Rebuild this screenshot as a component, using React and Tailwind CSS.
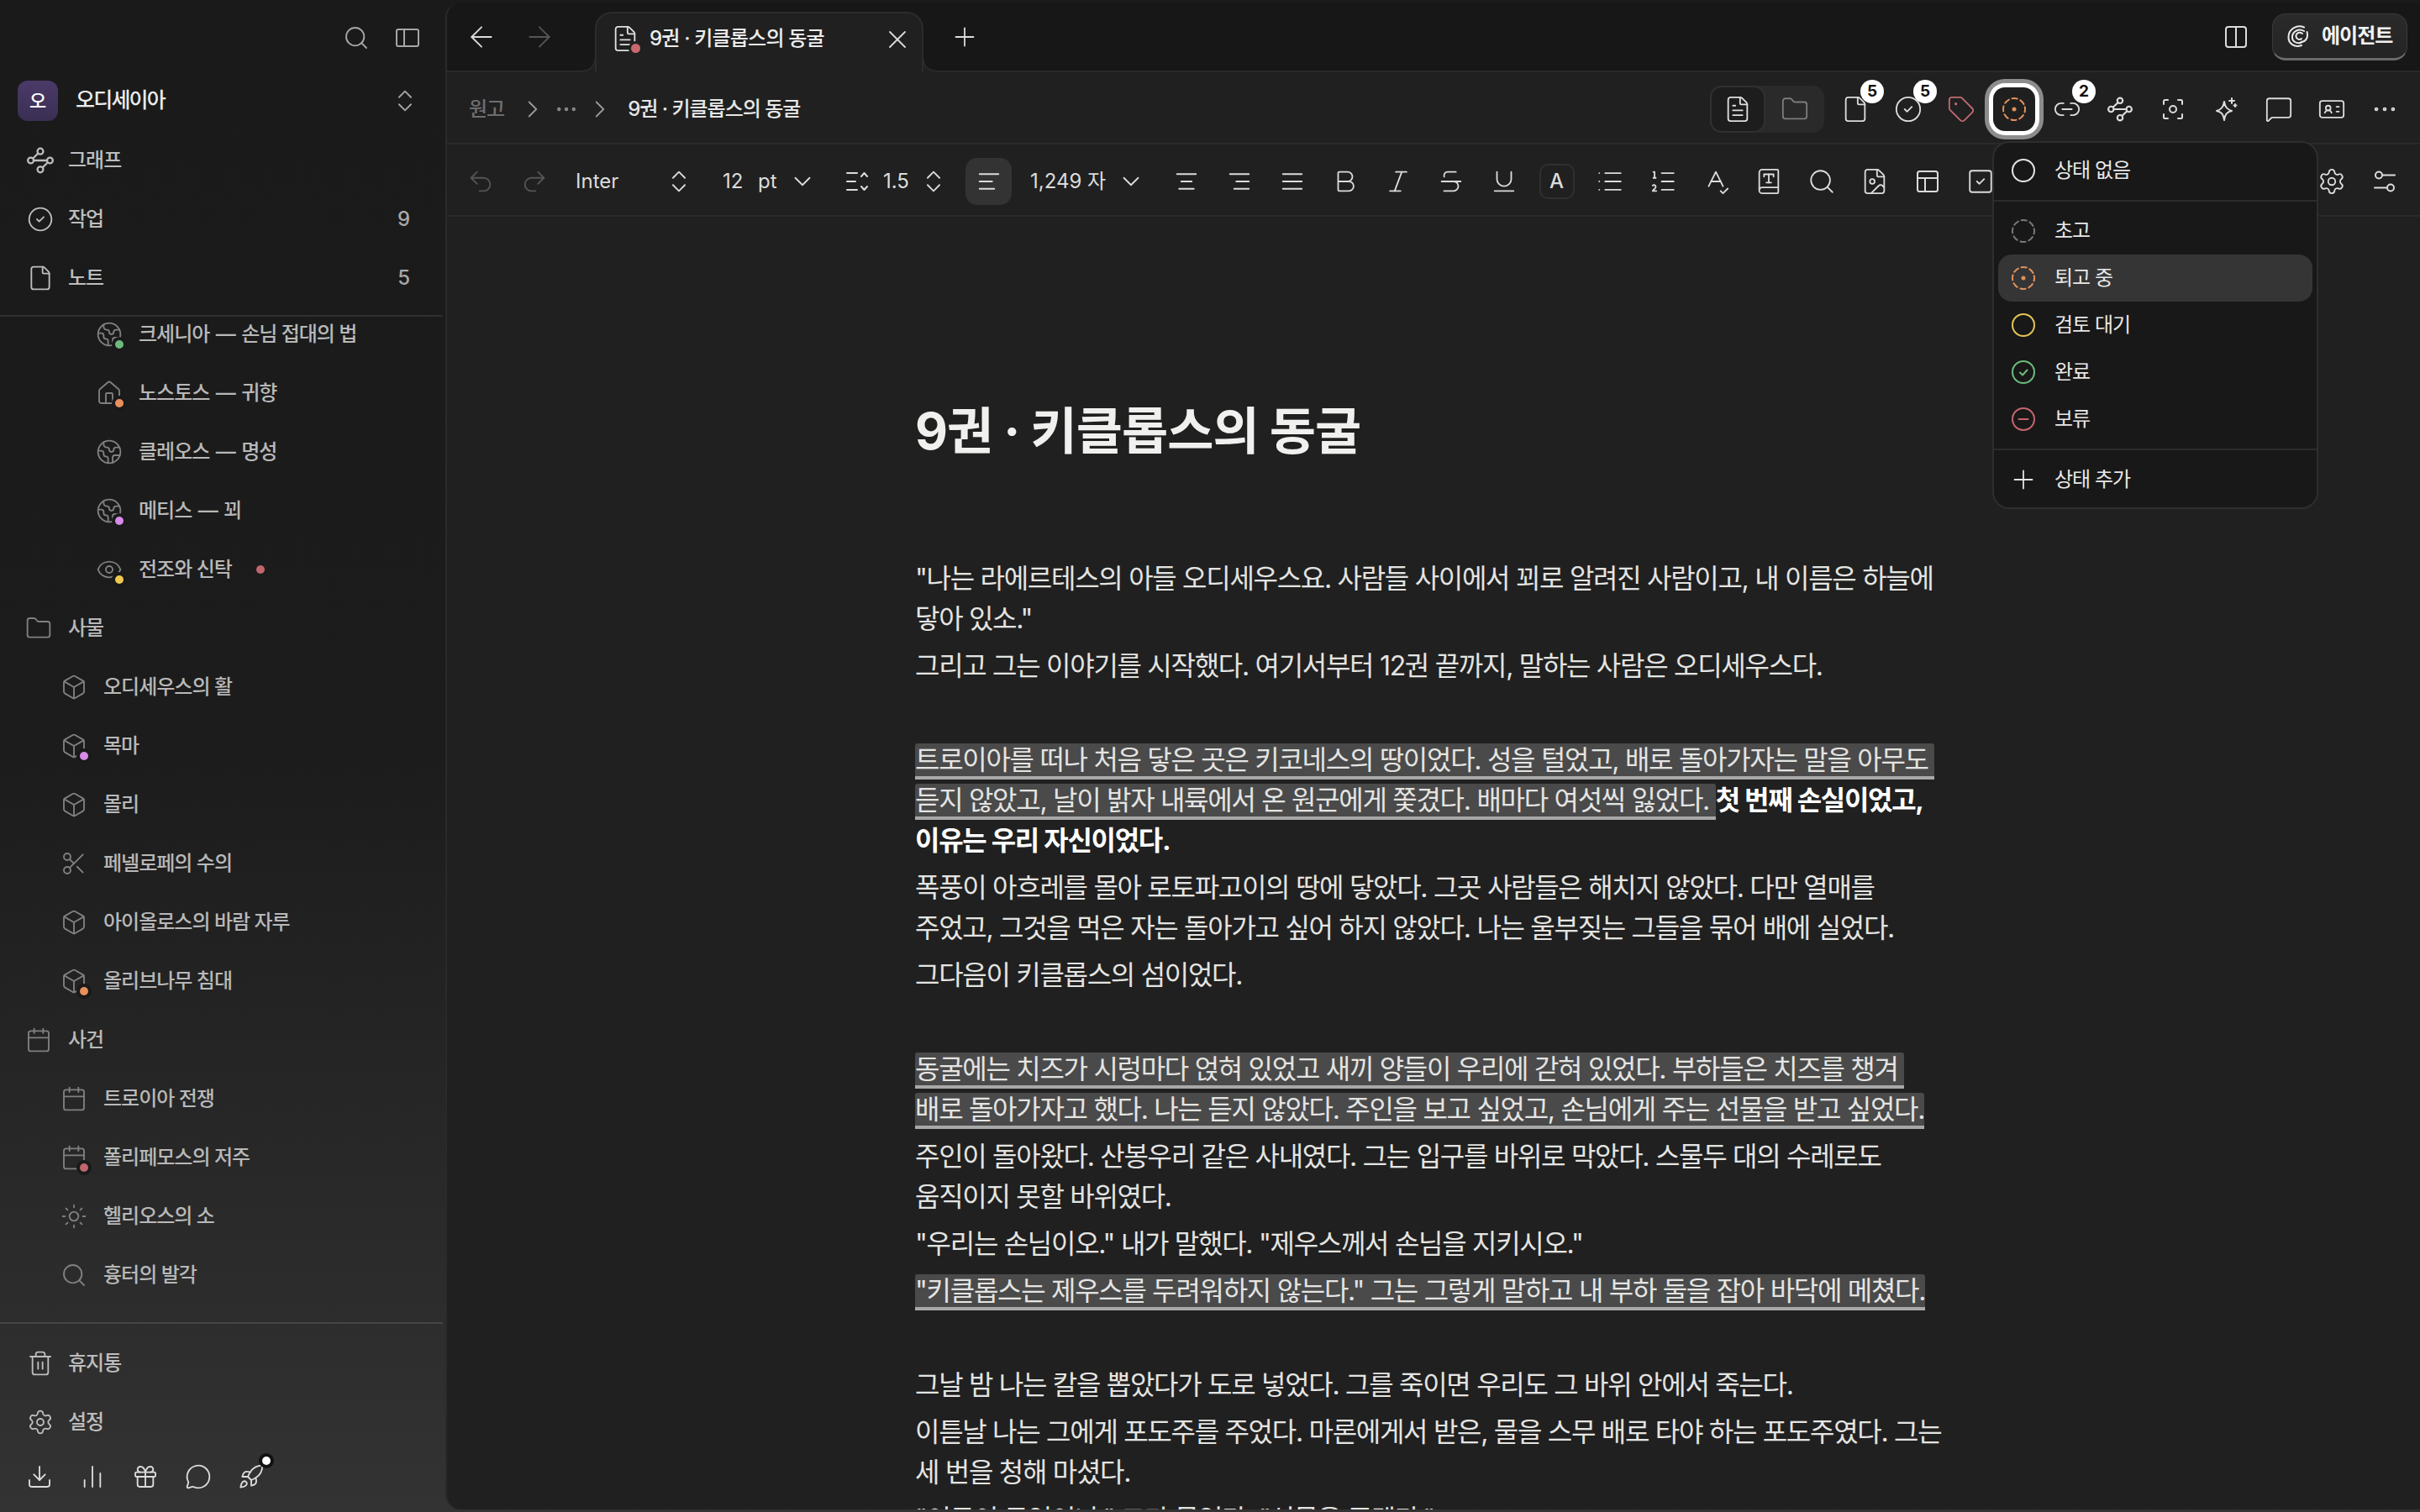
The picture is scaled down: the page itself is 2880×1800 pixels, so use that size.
import React from "react";
import {
  Search, ChevronsUpDown, CircleCheck, File, FileText, Earth, House, Eye, Folder, Box, Scissors, Calendar, Sun,
  Trash2, Settings, Download, ChartNoAxesColumn, Gift, MessageCircle, Rocket, ArrowLeft, ArrowRight, X, Plus,
  ChevronRight, ChevronDown, Ellipsis, Undo2, Redo2, AlignLeft, AlignCenter, AlignRight, AlignJustify, Bold, Italic,
  Strikethrough, Underline, List, ListOrdered, SpellCheck, BookType, FileImage, SquareCheck, Tag, Link2, MessageSquare,
  IdCard,
} from "lucide-react";

const Graph = ({ size = 28, className = "" }) => (
  <svg width={size} height={size} viewBox="0 0 28 28" fill="none" stroke="currentColor" strokeWidth="2" className={className}>
    <circle cx="14" cy="4.500" r="3" />
    <circle cx="4" cy="14" r="3" />
    <circle cx="24" cy="14" r="3" />
    <circle cx="14" cy="23.500" r="3" />
    <path d="M7 14h14M11.800 6.500 6.200 12M21.800 16l-5.600 5.500" />
  </svg>
);
const PanelIcon = ({ className = "" }) => (
  <svg width="30" height="30" viewBox="0 0 30 30" fill="none" stroke="currentColor" strokeWidth="2" className={className}>
    <rect x="2" y="5" width="26" height="20" rx="2" />
    <path d="M11 5v20" />
  </svg>
);
const SplitIcon = ({ className = "" }) => (
  <svg width="30" height="30" viewBox="0 0 30 30" fill="none" stroke="currentColor" strokeWidth="2" className={className}>
    <rect x="3" y="3" width="24" height="24" rx="3" />
    <path d="M15 3v24" />
  </svg>
);
const Spiral = () => (
  <svg width="30" height="30" viewBox="0 0 30 30" fill="none" stroke="#e8e8e8" strokeWidth="2" strokeLinecap="round">
    <path d="M22 4.500C14 1 4 6 3.500 15.500 3 24 11 29 19 26" />
    <path d="M22 9C16 5.500 8.500 9 8 15.500 7.500 21 13 25 19 22.500" />
    <path d="M25.500 10c2 7-2 12-7 12" />
    <path d="M20 12c-4-3-8 0-7.500 3.500.4 3 4 4.500 6.500 2.500" />
  </svg>
);
const ScanIcon = ({ className = "" }) => (
  <svg width="30" height="30" viewBox="0 0 30 30" fill="none" stroke="currentColor" strokeWidth="2" strokeLinecap="round" className={className}>
    <path d="M4 9V5.500A1.500 1.500 0 0 1 5.500 4H9M21 4h3.500A1.500 1.500 0 0 1 26 5.500V9M26 21v3.500a1.500 1.500 0 0 1-1.500 1.500H21M9 26H5.500A1.500 1.500 0 0 1 4 24.500V21" />
    <circle cx="15" cy="15" r="4" />
  </svg>
);
const SparkIcon = ({ className = "" }) => (
  <svg width="30" height="30" viewBox="0 0 30 30" fill="none" stroke="currentColor" strokeWidth="2" strokeLinecap="round" strokeLinejoin="round" className={className}>
    <path d="M13 6c1 6 3 9 9 11-6 1.500-8 4-9 11-1-7-3-9.500-9-11 6-2 8-5 9-11Z" />
    <path d="M22 2v6M19 5h6M26 9v3M24.500 10.500h3" />
  </svg>
);
const TableIcon = ({ className = "" }) => (
  <svg width="30" height="30" viewBox="0 0 30 30" fill="none" stroke="currentColor" strokeWidth="2" className={className}>
    <rect x="3" y="3" width="24" height="24" rx="2.500" />
    <path d="M3 11h24M12 11v16" />
  </svg>
);
const LineHeightIcon = ({ className = "" }) => (
  <svg width="30" height="30" viewBox="0 0 30 30" fill="none" stroke="currentColor" strokeWidth="2" strokeLinecap="round" strokeLinejoin="round" className={className}>
    <path d="M3 5h12M3 15h10M3 25h12M20 9l3.500-4 3.500 4M20 21l3.500 4 3.500-4" />
  </svg>
);
const SlidersIcon = ({ className = "" }) => (
  <svg width="30" height="30" viewBox="0 0 30 30" fill="none" stroke="currentColor" strokeWidth="2" strokeLinecap="round" className={className}>
    <circle cx="8" cy="7.500" r="4" />
    <path d="M12 7.500h15M3 22.500h15" />
    <circle cx="22" cy="22.500" r="4" />
  </svg>
);

const Status = ({ kind }) => {
  const common = { width: 28, height: 28, viewBox: "0 0 28 28", fill: "none", strokeWidth: 2 };
  if (kind === "none") return <svg {...common} stroke="#e4e4e4"><circle cx="14" cy="14" r="13" /></svg>;
  if (kind === "draft") return <svg {...common} stroke="#777"><circle cx="14" cy="14" r="13" strokeDasharray="6.200 4" strokeLinecap="round" transform="rotate(-12 14 14)" /></svg>;
  if (kind === "rev")
    return (
      <svg {...common} stroke="#e0905c">
        <circle cx="14" cy="14" r="13" strokeDasharray="6.200 4" strokeLinecap="round" transform="rotate(-12 14 14)" />
        <circle cx="14" cy="14" r="2.500" fill="#e0905c" stroke="none" />
      </svg>
    );
  if (kind === "wait") return <svg {...common} stroke="#e5c454"><circle cx="14" cy="14" r="13" /></svg>;
  if (kind === "done")
    return (
      <svg {...common} stroke="#6cbb7c" strokeLinecap="round" strokeLinejoin="round">
        <circle cx="14" cy="14" r="13" />
        <path d="m10 14.500 3 3 5.500-6" />
      </svg>
    );
  return (
    <svg {...common} stroke="#c4656e" strokeLinecap="round">
      <circle cx="14" cy="14" r="13" />
      <path d="M8.500 14h11" />
    </svg>
  );
};

const sideIcon = { size: 32, strokeWidth: 1.4 };

const NavRow = ({ Icon, label, count }) => (
  <div className="flex h-[70px] items-center pl-[32px] pr-[42px] text-[#bdbdbd]">
    <Icon {...sideIcon} className="shrink-0 text-[#bdbdbd]" />
    <span className="ml-[17px] text-[24px] font-medium tracking-[-1px]">{label}</span>
    {count && <span className="ml-auto text-[24px] font-medium text-[#a8a8a8]">{count}</span>}
  </div>
);

const TreeRow = ({ pl, Icon, label, dot, trail, dash }) => (
  <div className={`flex h-[70px] items-center ${pl}`}>
    <span className="relative shrink-0">
      <Icon {...sideIcon} className="text-[#808080]" />
      {dot && <span className={`absolute left-[23px] top-[23px] h-[10px] w-[10px] rounded-full shadow-[0_0_0_4px_#1a1a1a] ${dot}`} />}
    </span>
    <span className="ml-[19px] whitespace-nowrap text-[24px] font-medium tracking-[-1px] text-[#b8b8b8]">
      {label}
      {dash && <> <span className="mx-[2px]">—</span> {dash}</>}
    </span>
    {trail && <span className="ml-[29px] h-[10px] w-[10px] rounded-full bg-[#c0666c]" />}
  </div>
);

const L1 = "pl-[30px]";
const L2 = "pl-[72px]";
const L3 = "pl-[114px]";

const Sidebar = () => (
  <aside className="flex h-full w-[530px] shrink-0 flex-col">
    <div className="flex h-[90px] shrink-0 items-center justify-end gap-[30px] pr-[30px] text-[#a6a6a6]">
      <Search size={32} strokeWidth={1.4} />
      <PanelIcon />
    </div>
    <div className="flex h-[60px] shrink-0 items-center pl-[21px] pr-[31px]">
      <div className="flex h-[48px] w-[48px] items-center justify-center rounded-[12px] bg-gradient-to-b from-[#4a3a68] to-[#3b2f54] text-[22px] font-medium text-white">오</div>
      <span className="ml-[21px] text-[25px] font-medium tracking-[-1.8px] text-[#ececec]">오디세이아</span>
      <ChevronsUpDown size={34} strokeWidth={1.3} className="ml-auto text-[#a6a6a6]" />
    </div>
    <div className="mt-[6px] shrink-0">
      <NavRow Icon={Graph} label="그래프" />
      <NavRow Icon={CircleCheck} label="작업" count="9" />
      <NavRow Icon={File} label="노트" count="5" />
    </div>
    <div className="mr-[3px] mt-[9px] h-[2px] shrink-0 bg-[#303030]" />
    <div className="min-h-0 flex-1 overflow-hidden">
      <div className="-mt-[14px]">
        <TreeRow pl={L3} Icon={Earth} label="크세니아" dash="손님 접대의 법" dot="bg-[#6cbb7c]" />
        <TreeRow pl={L3} Icon={House} label="노스토스" dash="귀향" dot="bg-[#e8905c]" />
        <TreeRow pl={L3} Icon={Earth} label="클레오스" dash="명성" />
        <TreeRow pl={L3} Icon={Earth} label="메티스" dash="꾀" dot="bg-[#d98ae8]" />
        <TreeRow pl={L3} Icon={Eye} label="전조와 신탁" dot="bg-[#f0c850]" trail />
        <TreeRow pl={L1} Icon={Folder} label="사물" />
        <TreeRow pl={L2} Icon={Box} label="오디세우스의 활" />
        <TreeRow pl={L2} Icon={Box} label="목마" dot="bg-[#d98ae8]" />
        <TreeRow pl={L2} Icon={Box} label="몰리" />
        <TreeRow pl={L2} Icon={Scissors} label="페넬로페의 수의" />
        <TreeRow pl={L2} Icon={Box} label="아이올로스의 바람 자루" />
        <TreeRow pl={L2} Icon={Box} label="올리브나무 침대" dot="bg-[#e8905c]" />
        <TreeRow pl={L1} Icon={Calendar} label="사건" />
        <TreeRow pl={L2} Icon={Calendar} label="트로이아 전쟁" />
        <TreeRow pl={L2} Icon={Calendar} label="폴리페모스의 저주" dot="bg-[#c0666c]" />
        <TreeRow pl={L2} Icon={Sun} label="헬리오스의 소" />
        <TreeRow pl={L2} Icon={Search} label="흉터의 발각" />
        <TreeRow pl={L2} Icon={Calendar} label="" />
      </div>
    </div>
    <div className="mr-[3px] h-[2px] shrink-0 bg-[#454545]" />
    <div className="mt-[12px] shrink-0">
      <NavRow Icon={Trash2} label="휴지통" />
      <NavRow Icon={Settings} label="설정" />
    </div>
    <div className="mb-[12px] flex h-[60px] shrink-0 items-center pl-[15px] text-[#dcdcdc]">
      {[Download, ChartNoAxesColumn, Gift, MessageCircle].map((I, i) => (
        <span key={i} className="flex w-[63px] justify-center"><I size={32} strokeWidth={1.4} /></span>
      ))}
      <span className="relative flex w-[63px] justify-center">
        <Rocket size={32} strokeWidth={1.4} />
        <span className="absolute left-[45px] top-[-8px] h-[10px] w-[10px] rounded-full bg-white shadow-[0_0_0_4px_#111]" />
      </span>
    </div>
  </aside>
);

const Badge = ({ n }) => (
  <span className="absolute left-[38px] top-[-7px] flex h-[28px] w-[28px] items-center justify-center rounded-full bg-white text-[19px] font-bold text-[#111]">{n}</span>
);

const Slot = ({ children, className = "" }) => (
  <span className={`relative flex h-[56px] w-[63px] shrink-0 items-center justify-center ${className}`}>{children}</span>
);

const ti = { size: 34, strokeWidth: 1.3 };
const big = { size: 40, strokeWidth: 1.1 };

const TabBar = () => (
  <div className="flex h-[83px] shrink-0 items-center border-b-2 border-[#2a2a2a] bg-[#171717] pr-[15px]">
    <ArrowLeft {...big} className="ml-[21px] shrink-0 text-[#dcdcdc]" />
    <ArrowRight {...big} className="ml-[29px] shrink-0 text-[#555]" />
    <div className="relative -mb-[2px] ml-[46px] flex h-[72px] w-[391px] shrink-0 items-center self-end rounded-t-[20px] border-x-2 border-t-2 border-[#2c2c2c] bg-[#202020] pb-[10px] pl-[17px]">
      <span className="absolute bottom-0 left-[-16px] h-[16px] w-[14px] bg-[radial-gradient(circle_at_0_0,#171717_13px,#2c2c2c_14px,#202020_16px)]" />
      <span className="absolute bottom-0 right-[-16px] h-[16px] w-[14px] bg-[radial-gradient(circle_at_100%_0,#171717_13px,#2c2c2c_14px,#202020_16px)]" />
      <span className="relative shrink-0">
        <FileText size={34} strokeWidth={1.3} className="text-[#e0e0e0]" />
        <span className="absolute left-[24px] top-[23px] h-[11px] w-[11px] rounded-full bg-[#c8686e] shadow-[0_0_0_3px_#202020]" />
      </span>
      <span className="ml-[12px] whitespace-nowrap text-[24px] font-medium tracking-[-0.8px] text-[#ececec]">9권 · 키클롭스의 동굴</span>
      <X size={36} strokeWidth={1.2} className="absolute left-[340px] top-[13px] text-[#dcdcdc]" />
    </div>
    <Plus size={36} strokeWidth={1.2} className="ml-[31px] shrink-0 text-[#dcdcdc]" />
    <SplitIcon className="ml-auto shrink-0 text-[#dcdcdc]" />
    <div className="ml-[28px] flex h-[56px] w-[161px] shrink-0 items-center rounded-[16px] border border-b-[3px] border-[#3a3a3a] border-b-[#6a6a6a] bg-gradient-to-b from-[#2a2a2a] to-[#242424] pl-[15px]">
      <Spiral />
      <span className="ml-[13px] whitespace-nowrap text-[24px] font-bold tracking-[-1px] text-[#f2f2f2]">에이전트</span>
    </div>
  </div>
);

const Crumbs = () => (
  <div className="flex h-[86px] shrink-0 items-center border-b-2 border-[#2a2a2a] pl-[26px] pr-[11px] pt-[4px]">
    <span className="text-[24px] font-medium tracking-[-1px] text-[#6e6e6e]">원고</span>
    <ChevronRight size={34} strokeWidth={1.3} className="ml-[17px] text-[#9a9a9a]" />
    <Ellipsis size={30} strokeWidth={1.5} className="ml-[8px] text-[#8a8a8a]" />
    <ChevronRight size={34} strokeWidth={1.3} className="ml-[8px] text-[#9a9a9a]" />
    <span className="ml-[16px] whitespace-nowrap text-[24px] font-medium tracking-[-1px] text-[#e6e6e6]">9권 · 키클롭스의 동굴</span>
    <div className="ml-auto flex h-[56px] w-[136px] shrink-0 rounded-[14px] bg-[#2a2a2a]">
      <span className="flex h-[56px] w-[66px] items-center justify-center rounded-[14px] border-2 border-[#303030] bg-[#1d1d1d] text-[#e0e0e0]"><FileText {...ti} /></span>
      <span className="flex flex-1 items-center justify-center text-[#7c7c7c]"><Folder {...ti} /></span>
    </div>
    <div className="ml-[5px] flex text-[#dcdcdc]">
      <Slot><File {...ti} /><Badge n="5" /></Slot>
      <Slot><CircleCheck {...ti} /><Badge n="5" /></Slot>
      <Slot><Tag {...ti} className="text-[#c06a70]" /></Slot>
      <Slot>
        <span className="flex h-[52px] w-[50px] items-center justify-center rounded-[14px] bg-[#1f1f1f] shadow-[0_0_0_5px_#ffffff,0_0_0_10px_#8c8c8c]"><Status kind="rev" /></span>
      </Slot>
      <Slot><Link2 {...ti} /><Badge n="2" /></Slot>
      <Slot><Graph size={30} /></Slot>
      <Slot><ScanIcon /></Slot>
      <Slot><SparkIcon /></Slot>
      <Slot><MessageSquare {...ti} /></Slot>
      <Slot><IdCard {...ti} /></Slot>
      <Slot><Ellipsis {...ti} /></Slot>
    </div>
  </div>
);

const tool = { size: 34, strokeWidth: 1.3 };
const al = { size: 30, strokeWidth: 1.5 };
const Toolbar = () => (
  <div className="flex h-[86px] shrink-0 items-center border-b-2 border-[#2a2a2a] pl-[8px] pr-[11px] pt-[4px] text-[24px] text-[#dcdcdc]">
    <Slot className="w-[62px]"><Undo2 {...tool} className="text-[#555]" /></Slot>
    <Slot className="ml-[1px] w-[62px]"><Redo2 {...tool} className="text-[#555]" /></Slot>
    <span className="ml-[18px] w-[108px] shrink-0">Inter</span>
    <ChevronsUpDown {...tool} className="-mx-[2px] shrink-0" />
    <span className="ml-[37px] w-[42px] shrink-0">12</span>
    <span className="w-[38px] shrink-0">pt</span>
    <ChevronDown {...tool} className="-mx-[2px] shrink-0" />
    <LineHeightIcon className="ml-[35px] shrink-0" />
    <span className="ml-[16px] w-[45px] shrink-0">1.5</span>
    <ChevronsUpDown {...tool} className="-mx-[2px] shrink-0" />
    <span className="ml-[23px] flex h-[56px] w-[55px] shrink-0 items-center justify-center rounded-[14px] bg-[#333333]"><AlignLeft {...al} /></span>
    <span className="ml-[22px] w-[105px] shrink-0 whitespace-nowrap">1,249 자</span>
    <ChevronDown {...tool} className="-mx-[2px] shrink-0" />
    <div className="ml-[19px] flex">
      <Slot><AlignCenter {...al} /></Slot>
      <Slot><AlignRight {...al} /></Slot>
      <Slot><AlignJustify {...al} /></Slot>
      <Slot><Bold {...tool} /></Slot>
      <Slot><Italic {...tool} /></Slot>
      <Slot><Strikethrough {...tool} /></Slot>
      <Slot><Underline {...tool} /></Slot>
      <Slot><span className="flex h-[42px] w-[42px] items-center justify-center rounded-[10px] border-2 border-[#303030] font-medium">A</span></Slot>
      <Slot><List {...tool} /></Slot>
      <Slot><ListOrdered {...tool} /></Slot>
      <Slot><SpellCheck {...tool} /></Slot>
      <Slot><BookType {...tool} /></Slot>
      <Slot><Search {...tool} /></Slot>
      <Slot><FileImage {...tool} /></Slot>
      <Slot><TableIcon /></Slot>
      <Slot><SquareCheck {...tool} /></Slot>
    </div>
    <div className="ml-auto flex">
      <Slot><Settings {...tool} /></Slot>
      <Slot><SlidersIcon /></Slot>
    </div>
  </div>
);

const Hl = ({ children }) => (
  <span className="rounded-t-[3px] border-b-4 border-[#a8a8a8] bg-[#4a4a4a] box-decoration-clone">{children}</span>
);
const P = ({ children }) => <p className="mb-2 whitespace-nowrap">{children}</p>;
const Gap = () => <div className="h-[56px]" />;

const Editor = () => (
  <div className="min-h-0 flex-1 overflow-hidden pl-[557px] pt-[219px]">
    <h1 className="h-[72px] text-[60px] font-bold leading-[72px] tracking-[-1px] text-[#f0f0ee]">9권 · 키클롭스의 동굴</h1>
    <div className="mt-[116px] text-[32px] leading-[48px] tracking-[-1.3px] text-[#e4e4e2]">
      <P>"나는 라에르테스의 아들 오디세우스요. 사람들 사이에서 꾀로 알려진 사람이고, 내 이름은 하늘에<br />닿아 있소."</P>
      <P>그리고 그는 이야기를 시작했다. 여기서부터 12권 끝까지, 말하는 사람은 오디세우스다.</P>
      <Gap />
      <P>
        <Hl>트로이아를 떠나 처음 닿은 곳은 키코네스의 땅이었다. 성을 털었고, 배로 돌아가자는 말을 아무도{"\u00A0"}<br />듣지 않았고, 날이 밝자 내륙에서 온 원군에게 쫓겼다. 배마다 여섯씩 잃었다. </Hl>
        <b className="font-bold text-white">첫 번째 손실이었고,<br />이유는 우리 자신이었다.</b>
      </P>
      <P>폭풍이 아흐레를 몰아 로토파고이의 땅에 닿았다. 그곳 사람들은 해치지 않았다. 다만 열매를<br />주었고, 그것을 먹은 자는 돌아가고 싶어 하지 않았다. 나는 울부짖는 그들을 묶어 배에 실었다.</P>
      <P>그다음이 키클롭스의 섬이었다.</P>
      <Gap />
      <P><Hl>동굴에는 치즈가 시렁마다 얹혀 있었고 새끼 양들이 우리에 갇혀 있었다. 부하들은 치즈를 챙겨{"\u00A0"}<br />배로 돌아가자고 했다. 나는 듣지 않았다. 주인을 보고 싶었고, 손님에게 주는 선물을 받고 싶었다.</Hl></P>
      <P>주인이 돌아왔다. 산봉우리 같은 사내였다. 그는 입구를 바위로 막았다. 스물두 대의 수레로도<br />움직이지 못할 바위였다.</P>
      <P>"우리는 손님이오." 내가 말했다. "제우스께서 손님을 지키시오."</P>
      <P><Hl>"키클롭스는 제우스를 두려워하지 않는다." 그는 그렇게 말하고 내 부하 둘을 잡아 바닥에 메쳤다.</Hl></P>
      <Gap />
      <P>그날 밤 나는 칼을 뽑았다가 도로 넣었다. 그를 죽이면 우리도 그 바위 안에서 죽는다.</P>
      <P>이튿날 나는 그에게 포도주를 주었다. 마론에게서 받은, 물을 스무 배로 타야 하는 포도주였다. 그는<br />세 번을 청해 마셨다.</P>
      <P>"이곳이 무엇이냐." 그가 물었다. "선물을 주겠다."</P>
    </div>
  </div>
);

const MenuRow = ({ kind, label, active }) => (
  <div className={`mx-[5px] flex h-[56px] items-center rounded-[16px] pl-[16px] ${active ? "bg-[#353535]" : ""}`}>
    {kind === "add" ? <Plus size={36} strokeWidth={1.2} className="-mx-[4px] text-[#e4e4e4]" /> : <Status kind={kind} />}
    <span className="ml-[23px] whitespace-nowrap text-[24px] tracking-[-1px] text-[#e8e8e8]">{label}</span>
  </div>
);

const Menu = () => (
  <div className="absolute left-[2371px] top-[168px] w-[388px] rounded-[20px] border-2 border-[#2e2e2e] bg-[#181818] pt-[5px]">
    <MenuRow kind="none" label="상태 없음" />
    <div className="mt-[7px] h-[2px] bg-[#2c2c2c]" />
    <div className="pt-[7px]">
      <MenuRow kind="draft" label="초고" />
      <MenuRow kind="rev" label="퇴고 중" active />
      <MenuRow kind="wait" label="검토 대기" />
      <MenuRow kind="done" label="완료" />
      <MenuRow kind="hold" label="보류" />
    </div>
    <div className="mt-[7px] h-[2px] bg-[#2c2c2c]" />
    <div className="pb-[5px] pt-[7px]">
      <MenuRow kind="add" label="상태 추가" />
    </div>
  </div>
);

export default function App() {
  return (
    <div lang="ko" className="relative flex h-[1800px] w-[2880px] overflow-hidden bg-gradient-to-b from-[#1a1a1a] via-[#1c1c1c] via-50% to-[#333333] [font-family:Inter,'Noto_Sans_CJK_KR',sans-serif]">
      <Sidebar />
      <main className="my-[3px] flex min-w-0 flex-1 flex-col overflow-hidden rounded-l-[18px] border-l-2 border-[#2a2a2a] bg-[#202020]">
        <TabBar />
        <Crumbs />
        <Toolbar />
        <Editor />
      </main>
      <Menu />
    </div>
  );
}
